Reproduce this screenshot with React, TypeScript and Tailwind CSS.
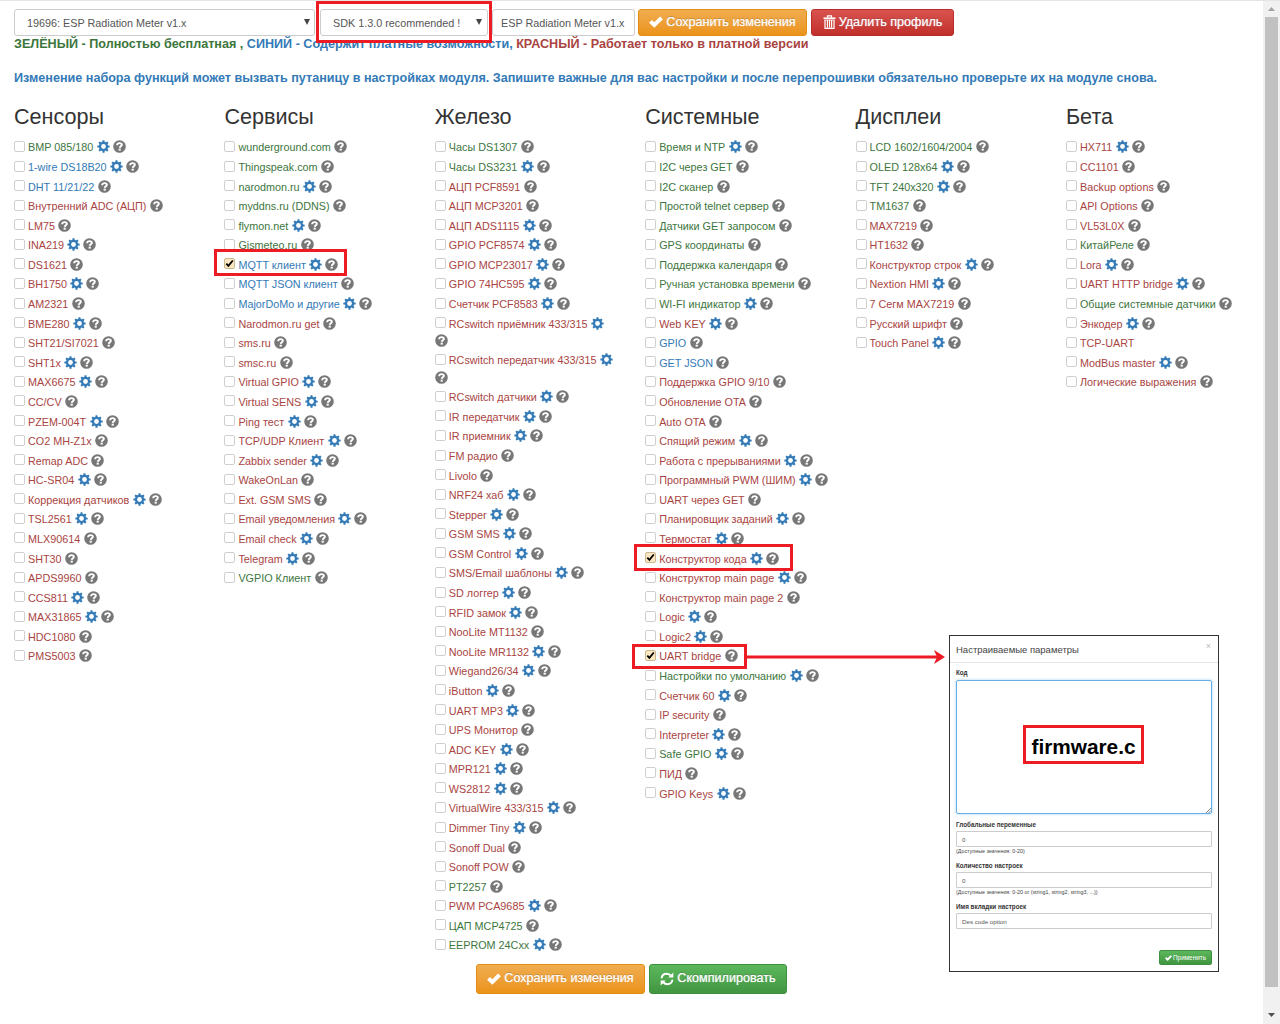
import React from "react";

type Tone = "g" | "b" | "r";
type Item = { t: Tone; name: string; cog?: boolean; help?: boolean; on?: boolean; wide?: boolean };

const tones: Record<Tone, string> = {
  g: "text-[#3c763d]",
  b: "text-[#337ab7]",
  r: "text-[#a94442]",
};

/* Each entry is "tone|name|flags": c = cog, n = no help, x = checked, w = keep on one line. */
const parse = (src: string): Item[] =>
  src
    .trim()
    .split("\n")
    .map((line) => {
      const [t, name, flags = ""] = line.trim().split("|");
      return {
        t: t as Tone,
        name,
        cog: flags.includes("c"),
        help: !flags.includes("n"),
        on: flags.includes("x"),
        wide: flags.includes("w"),
      };
    });

const columns: { title: string; items: Item[] }[] = [
  {
    title: "Сенсоры",
    items: parse(`g|BMP 085/180|c
      b|1-wire DS18B20|c
      b|DHT 11/21/22
      r|Внутренний ADC (АЦП)
      r|LM75
      r|INA219|c
      r|DS1621
      r|BH1750|c
      r|AM2321
      r|BME280|c
      r|SHT21/SI7021
      r|SHT1x|c
      r|MAX6675|c
      r|CC/CV
      r|PZEM-004T|c
      r|CO2 MH-Z1x
      r|Remap ADC
      r|HC-SR04|c
      r|Коррекция датчиков|c
      r|TSL2561|c
      r|MLX90614
      r|SHT30
      r|APDS9960
      r|CCS811|c
      r|MAX31865|c
      r|HDC1080
      r|PMS5003`),
  },
  {
    title: "Сервисы",
    items: parse(`g|wunderground.com
      g|Thingspeak.com
      g|narodmon.ru|c
      g|myddns.ru (DDNS)
      g|flymon.net|c
      g|Gismeteo.ru
      b|MQTT клиент|cx
      b|MQTT JSON клиент
      b|MajorDoMo и другие|c
      r|Narodmon.ru get
      r|sms.ru
      r|smsc.ru
      r|Virtual GPIO|c
      r|Virtual SENS|c
      r|Ping тест|c
      r|TCP/UDP Клиент|c
      r|Zabbix sender|c
      r|WakeOnLan
      r|Ext. GSM SMS
      r|Email уведомления|c
      r|Email check|c
      r|Telegram|c
      g|VGPIO Клиент`),
  },
  {
    title: "Железо",
    items: parse(`g|Часы DS1307
      g|Часы DS3231|c
      r|АЦП PCF8591
      r|АЦП MCP3201
      r|АЦП ADS1115|c
      r|GPIO PCF8574|c
      r|GPIO MCP23017|c
      r|GPIO 74HC595|c
      r|Счетчик PCF8583|c
      r|RCswitch приёмник 433/315|c
      r|RCswitch передатчик 433/315|c
      r|RCswitch датчики|c
      r|IR передатчик|c
      r|IR приемник|c
      r|FM радио
      r|Livolo
      r|NRF24 хаб|c
      r|Stepper|c
      r|GSM SMS|c
      r|GSM Control|c
      r|SMS/Email шаблоны|c
      r|SD логгер|c
      r|RFID замок|c
      r|NooLite MT1132
      r|NooLite MR1132|c
      r|Wiegand26/34|c
      r|iButton|c
      r|UART MP3|c
      r|UPS Монитор
      r|ADC KEY|c
      r|MPR121|c
      r|WS2812|c
      r|VirtualWire 433/315|c
      r|Dimmer Tiny|c
      r|Sonoff Dual
      r|Sonoff POW
      g|PT2257
      r|PWM PCA9685|c
      g|ЦАП MCP4725
      g|EEPROM 24Cxx|c`),
  },
  {
    title: "Системные",
    items: parse(`g|Время и NTP|c
      g|I2C через GET
      g|I2C сканер
      g|Простой telnet сервер
      g|Датчики GET запросом
      g|GPS координаты
      g|Поддержка календаря
      g|Ручная установка времени
      g|WI-FI индикатор|c
      r|Web KEY|c
      b|GPIO
      b|GET JSON
      r|Поддержка GPIO 9/10
      r|Обновление OTA
      r|Auto OTA
      r|Спящий режим|c
      r|Работа с прерываниями|c
      r|Программный PWM (ШИМ)|cw
      r|UART через GET
      r|Планировщик заданий|c
      r|Термостат|c
      r|Конструктор кода|cx
      r|Конструктор main page|c
      r|Конструктор main page 2
      r|Logic|c
      r|Logic2|c
      r|UART bridge|x
      g|Настройки по умолчанию|c
      r|Счетчик 60|c
      r|IP security
      r|Interpreter|c
      g|Safe GPIO|c
      r|ПИД
      r|GPIO Keys|c`),
  },
  {
    title: "Дисплеи",
    items: parse(`g|LCD 1602/1604/2004
      g|OLED 128x64|c
      g|TFT 240x320|c
      g|TM1637
      r|MAX7219
      r|HT1632
      r|Конструктор строк|c
      r|Nextion HMI|c
      r|7 Сегм MAX7219
      r|Русский шрифт
      r|Touch Panel|c`),
  },
  {
    title: "Бета",
    items: parse(`r|HX711|c
      r|CC1101
      r|Backup options
      r|API Options
      r|VL53L0X
      g|КитайРеле
      r|Lora|c
      r|UART HTTP bridge|c
      g|Общие системные датчики
      r|Энкодер|c
      r|TCP-UART|n
      r|ModBus master|c
      r|Логические выражения`),
  },
];

const Cog = () => (
  <svg viewBox="0 0 24 24" className="mb-[1px] h-[13px] w-[13px] shrink-0 text-[#337ab7]" fill="currentColor">
    <g>
      <rect x="10" y="0.6" width="4" height="22.8" rx="1" />
      <rect x="10" y="0.6" width="4" height="22.8" rx="1" transform="rotate(45 12 12)" />
      <rect x="10" y="0.6" width="4" height="22.8" rx="1" transform="rotate(90 12 12)" />
      <rect x="10" y="0.6" width="4" height="22.8" rx="1" transform="rotate(135 12 12)" />
      <circle cx="12" cy="12" r="8.6" />
    </g>
    <circle cx="12" cy="12" r="4.4" fill="#fff" />
  </svg>
);

const Help = () => (
  <svg viewBox="0 0 24 24" className="mb-[1px] h-[13px] w-[13px] shrink-0" fill="none">
    <circle cx="12" cy="12" r="11.6" fill="#777" />
    <path d="M7.6 9.6C7.8 7 9.700 5.800 12.100 5.800c2.600 0 4.200 1.200 4.200 3.100 0 2.700-3.600 2.600-3.800 5.600" stroke="#fff" strokeWidth="3.600" />
    <rect x="10.400" y="16" width="4" height="3.600" fill="#fff" />
  </svg>
);

const Check = ({ className }: { className: string }) => (
  <svg viewBox="0 0 14 12" className={className} fill="currentColor">
    <path d="M0.100 6.800 2.900 4 5.300 6.300 11.100 0.400 13.900 3.200 5.300 11.800Z" />
  </svg>
);

const Trash = () => (
  <svg viewBox="0 0 13 14" className="h-[14px] w-[13px]" fill="none" stroke="currentColor">
    <path d="M0.500 3.200h12" strokeWidth="1.600" />
    <path d="M4.500 2.500V0.800h4v1.700" strokeWidth="1.200" />
    <path d="M2 5v8.300h9V5M4.400 5v7.500M6.500 5v7.500M8.600 5v7.500" strokeWidth="1.200" />
    <path d="M1.400 5h10.200" strokeWidth="0.800" />
  </svg>
);

const Refresh = () => (
  <svg viewBox="0 0 14 14" className="h-[14px] w-[14px]" fill="none" stroke="currentColor" strokeWidth="1.900">
    <path d="M1.500 6.300C1.900 3.400 4 1.700 6.600 1.700c1.700 0 3 .7 4 1.800" />
    <path d="M12.500 7.700c-.4 2.900-2.500 4.600-5.100 4.600-1.700 0-3-.7-4-1.800" />
    <path d="M13.300 0.600v5H8.300Z" fill="currentColor" stroke="none" />
    <path d="M0.700 13.400v-5h5Z" fill="currentColor" stroke="none" />
  </svg>
);

const Box = ({ on }: { on?: boolean }) =>
  on ? (
    <span className="mr-[3px] mb-[2px] flex h-[11px] w-[11px] shrink-0 items-center justify-center rounded-[2px] border border-[#c9b78f] bg-[#fbe8c2] text-black">
      <svg viewBox="0 0 9 9" className="h-[9px] w-[9px]" fill="none" stroke="currentColor" strokeWidth="1.800">
        <path d="M1.300 4.600 3.400 6.900 7.800 1.500" />
      </svg>
    </span>
  ) : (
    <span className="mr-[3px] mb-[2px] h-[11px] w-[11px] shrink-0 rounded-[2px] border border-[#cfcfcf] bg-white" />
  );

const Row = ({ item }: { item: Item }) => (
  <div className={`mb-[2.330px] flex items-center ${item.wide ? "flex-nowrap" : "flex-wrap"}`}>
    <span className="flex h-[17.250px] items-center">
      <Box on={item.on} />
      <span className={`mr-[3.400px] whitespace-nowrap pt-[1px] ${tones[item.t]}`}>{item.name}</span>
    </span>
    {item.cog && (
      <span className="mr-[3px] flex h-[17.250px] items-center">
        <Cog />
      </span>
    )}
    {item.help && (
      <span className="flex h-[17.250px] items-center">
        <Help />
      </span>
    )}
  </div>
);

const orange = "border-[#e38d13] from-[#f0ad4e] to-[#eb9316]";
const red = "border-[#b92c28] from-[#d9534f] to-[#c12e2a]";
const green = "border-[#3e8f3e] from-[#5cb85c] to-[#419641]";

const Button = ({ tone, size, icon, children }: { tone: string; size: string; icon: React.ReactNode; children: React.ReactNode }) => (
  <button
    className={`flex shrink-0 items-center justify-center gap-[3px] whitespace-nowrap rounded-[3px] border bg-gradient-to-b pb-[1px] text-[12.600px] text-white [text-shadow:0_-1px_0_rgba(0,0,0,0.2),0_0_1px_rgba(255,255,255,0.8)] ${tone} ${size}`}
  >
    {icon}
    <span>{children}</span>
  </button>
);

const Select = ({ size, children }: { size: string; children: React.ReactNode }) => (
  <div className={`flex shrink-0 items-center justify-between rounded-[3px] border border-[#ccc] bg-white pl-3 pt-[1px] text-[#555] ${size}`}>
    <span>{children}</span>
    <svg viewBox="0 0 6 6" className="mb-[2px] h-[6px] w-[6px]" fill="#444">
      <path d="M0 0h6L3 6Z" />
    </svg>
  </div>
);

const Field = ({ label, value, hint }: { label: string; value: string; hint?: string }) => (
  <div className="flex h-[41px] flex-col">
    <div className="h-[11px] pt-[1px] text-[6.300px] font-bold leading-[8px] text-[#333]">{label}</div>
    <div className="flex h-[16px] items-center rounded-[1px] border border-[#ccc] pl-[5px] text-[6.200px] text-[#555]">{value}</div>
    {hint && <div className="text-[5.350px] leading-[8px] text-[#444]">{hint}</div>}
  </div>
);

const Dialog = () => (
  <div className="absolute left-[949px] top-[635px] flex h-[337px] w-[270px] flex-col border border-[#333] bg-white">
    <div className="flex h-[27px] shrink-0 items-center justify-between border-b border-[#e5e5e5] pl-[6px] pr-[7px]">
      <span className="text-[9.500px] text-[#444]">Настраиваемые параметры</span>
      <span className="mb-[6px] text-[9px] text-[#bbb]">×</span>
    </div>
    <div className="flex flex-col pl-[6px] pr-[6px] pt-[5px]">
      <div className="h-[12px] text-[6.300px] font-bold leading-[10px] text-[#333]">Код</div>
      <div className="relative flex h-[134px] items-center justify-center rounded-[2px] border border-[#66afe9] shadow-[0_0_3px_rgba(102,175,233,0.6)]">
        <div className="mb-[5px] mr-[1px] flex h-[39px] w-[121px] items-center justify-center border-[3px] border-[#ed1c24] pt-[3px] text-[20.800px] font-bold text-black">
          firmware.c
        </div>
        <svg viewBox="0 0 5 5" className="absolute bottom-0 right-0 h-[5px] w-[5px]" stroke="#555" strokeWidth="0.700">
          <path d="M0 5 5 0M2.500 5 5 2.500" />
        </svg>
      </div>
      <div className="mt-[6px]">
        <Field label="Глобальные переменные" value="0" hint="(Доступные значения: 0-20)" />
        <Field label="Количество настроек" value="0" hint="(Доступные значения: 0-20 or (string1, string2, string3, ...))" />
        <Field label="Имя вкладки настроек" value="Des code option" />
      </div>
      <button
        className={`mt-[7px] flex h-[15px] w-[53px] items-center justify-center gap-[1px] self-end rounded-[2px] border bg-gradient-to-b text-[6.400px] text-white ${green}`}
      >
        <Check className="h-[6px] w-[7px]" />
        <span>Применить</span>
      </button>
    </div>
  </div>
);

const Frame = ({ place }: { place: string }) => (
  <div className={`pointer-events-none absolute border-[3px] border-[#ed1c24] ${place}`} />
);

export default function App() {
  return (
    <div className="relative flex h-[1024px] w-[1280px] overflow-hidden border-t border-[#e5e5e5] bg-white font-['Liberation_Sans',Arial,sans-serif] text-[10.800px] leading-[15px]">
      <main className="flex w-[1263px] shrink-0 flex-col pl-[14px] pt-[8px]">
        <div className="flex h-[27px]">
          <Select size="mr-[5px] w-[301px] pr-[4px]">19696: ESP Radiation Meter v1.x</Select>
          <Select size="mr-[4px] w-[168px] pr-[5px]">SDK 1.3.0 recommended !</Select>
          <div className="mr-[3px] flex w-[143px] shrink-0 items-center rounded-[3px] border border-[#ccc] pl-2 pt-[1px] text-[#555]">ESP Radiation Meter v1.x</div>
          <Button tone={orange} size="mr-[4px] w-[169px] h-[27px]" icon={<Check className="h-[12px] w-[14px]" />}>Сохранить изменения</Button>
          <Button tone={red} size="w-[143px] h-[27px]" icon={<Trash />}>Удалить профиль</Button>
        </div>
        <p className="h-[17px] whitespace-nowrap text-[12.600px] font-bold leading-[16px]">
          <span className="text-[#3c763d]">ЗЕЛЁНЫЙ - Полностью бесплатная , </span>
          <span className="text-[#337ab7]">СИНИЙ - Содержит платные возможности, </span>
          <span className="text-[#a94442]">КРАСНЫЙ - Работает только в платной версии</span>
        </p>
        <p className="mt-[17px] h-[17px] whitespace-nowrap text-[12.600px] font-bold leading-[16px] text-[#337ab7]">
          Изменение набора функций может вызвать путаницу в настройках модуля. Запишите важные для вас настройки и после перепрошивки обязательно проверьте их на модуле снова.
        </p>
        <div className="flex h-[877px] shrink-0 pt-[18px]">
          {columns.map((c) => (
            <section key={c.title} className="w-[210.400px] shrink-0 pr-[27px]">
              <h3 className="mb-[9.800px] h-[24px] text-[21.600px] leading-[24px] text-[#333]">{c.title}</h3>
              {c.items.map((i) => (
                <Row key={i.name} item={i} />
              ))}
            </section>
          ))}
        </div>
        <div className="flex shrink-0 gap-[4px] pl-[462px]">
          <Button tone={orange} size="w-[169px] h-[30px]" icon={<Check className="h-[12px] w-[14px]" />}>Сохранить изменения</Button>
          <Button tone={green} size="w-[138px] h-[30px]" icon={<Refresh />}>Скомпилировать</Button>
        </div>
      </main>
      <aside className="flex w-[17px] shrink-0 flex-col items-center bg-[#f1f1f1] pt-[6px]">
        <svg viewBox="0 0 7 4" className="h-[4px] w-[7px]" fill="#a3a3a3">
          <path d="M0 4h7L3.500 0Z" />
        </svg>
        <div className="mt-[6px] h-[970px] w-[13px] bg-[#c1c1c1]" />
        <svg viewBox="0 0 7 4" className="mt-[26px] h-[4px] w-[7px]" fill="#505050">
          <path d="M0 0h7L3.500 4Z" />
        </svg>
      </aside>
      <div className="absolute left-0 top-[-1px] h-0 w-0">
        <Frame place="left-[316px] top-[1px] h-[42px] w-[176px]" />
        <Frame place="left-[214px] top-[249px] h-[27px] w-[133px]" />
        <Frame place="left-[634px] top-[544px] h-[27px] w-[159px]" />
        <Frame place="left-[632px] top-[644px] h-[25px] w-[115px]" />
        <svg viewBox="0 0 198 14" className="absolute left-[747px] top-[650px] h-[14px] w-[198px] max-w-none" fill="#ed1c24">
          <path d="M0 5.500h190v3H0Z" />
          <path d="M187 0 198 7 187 14 190 7Z" />
        </svg>
        <Dialog />
      </div>
    </div>
  );
}
